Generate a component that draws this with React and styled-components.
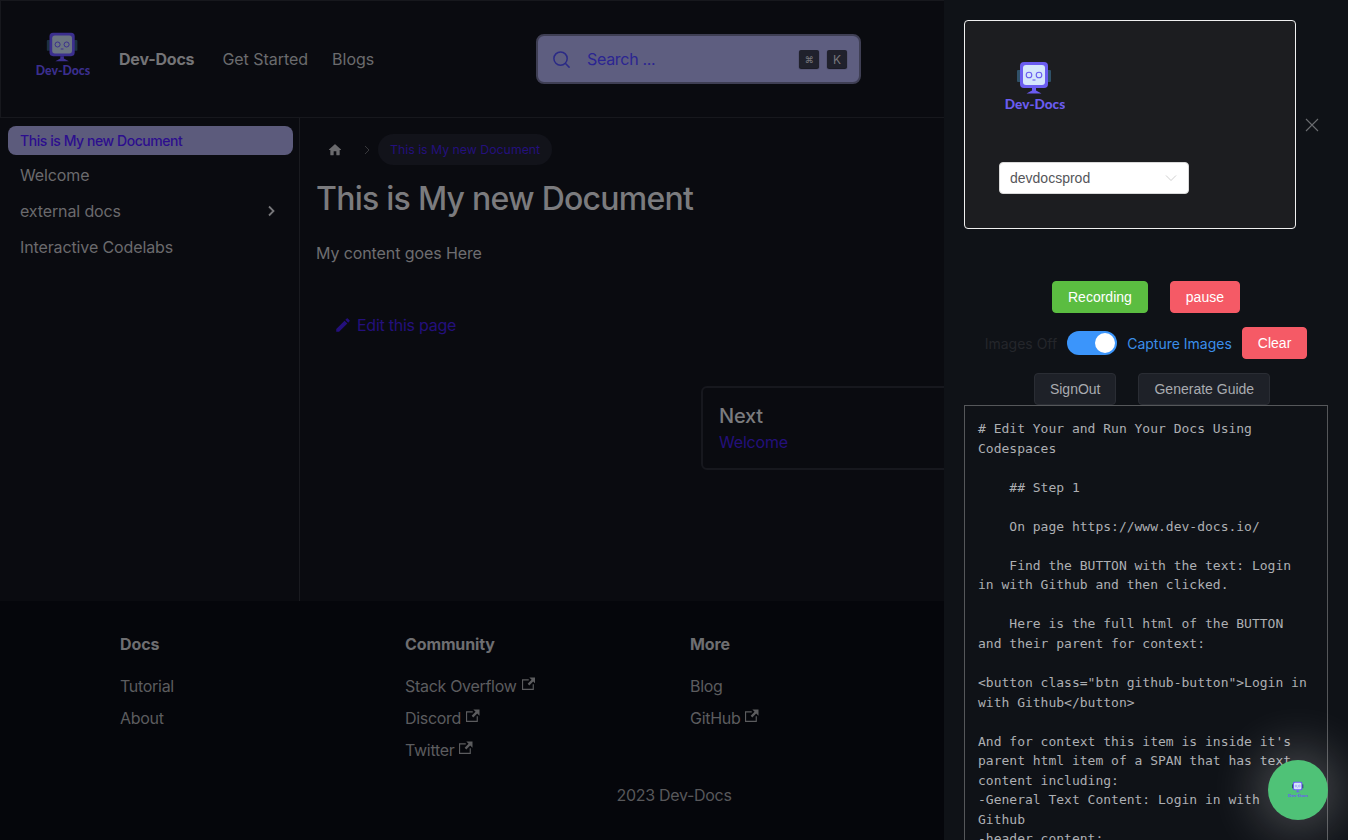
import React from 'react';
import styled, { createGlobalStyle } from 'styled-components';

const Global = createGlobalStyle`
  html, body { margin: 0; padding: 0; height: 100%; overflow: hidden; background: #0a0b10; }
  * { box-sizing: border-box; }
  body { font-family: Inter, "Liberation Sans", sans-serif; -webkit-font-smoothing: antialiased; }
`;

const Page = styled.div`
  width: 1348px; height: 840px; display: flex; flex-direction: column; overflow: hidden; position: relative;
  background: #0a0b10; color: #707073;
`;
const Nav = styled.header`
  height: 118px; flex: none; display: flex; align-items: center; padding: 0 0 0 35px;
  border: 1px solid #17181d; border-right: 0;
`;
const NavLogo = styled.div`margin-top: -9px;`;
const NavBrand = styled.a`font-weight: 700; font-size: 16px; color: #747477; margin: 0 28px 0 29px; line-height: 24px; letter-spacing: -0.2px;`;
const NavLink = styled.a`font-size: 16px; color: #6b6b6e; margin-right: 24px; line-height: 24px; letter-spacing: -0.03px;`;
const SearchBox = styled.div`
  position: absolute; left: 536px; top: 34px; width: 325px; height: 50px; display: flex; align-items: center;
  padding: 0 12px 0 14px; background: #5e5e80; border: 2px solid #3f3f54; border-radius: 8px;
  color: #2b2592; font-size: 16px; letter-spacing: -0.3px;
`;
const SearchText = styled.span`margin-left: 16px; flex: 1;`;
const Key = styled.kbd`
  width: 20px; height: 18px; margin-left: 8px; display: flex; align-items: center; justify-content: center;
  background: #20212c; border-radius: 2px; box-shadow: 0 1px 1px #14151c; color: #77777c;
  font: ${p => p.$small ? '9px' : '12px'} Inter, sans-serif;
`;
const Body = styled.div`height: 483px; flex: none; display: flex;`;
const Sidebar = styled.nav`width: 300px; flex: none; border-right: 1px solid #1a1b20; padding: 8px 6px 0 8px;`;
const SideActive = styled.a`
  display: block; height: 29px; padding: 0 12px; line-height: 30px; font-size: 14px; font-weight: 500;
  background: #5c5b7c; color: #2c0e8e; border-radius: 8px; letter-spacing: -0.44px; margin-bottom: 2px;
`;
const SideItem = styled.a`
  display: flex; align-items: center; justify-content: space-between; height: 36px; padding: 0 12px;
  font-size: 16px; color: #6a6a6d; letter-spacing: -0.12px;
`;
const Main = styled.main`flex: 1; padding: 16px 0 0 16px; min-width: 0;`;
const Crumbs = styled.div`display: flex; align-items: center; height: 31px; padding-left: 11px;`;
const CrumbSep = styled.span`width: 36px; display: flex; justify-content: flex-end; padding-right: 8px;`;
const CrumbPill = styled.span`
  height: 31px; padding: 0 12px; display: flex; align-items: center; border-radius: 16px;
  background: #12131a; color: #24107c; font-size: 12.3px; margin-left: -1px;
`;
const Title = styled.h1`margin: 15px 0 0; font-size: 32px; line-height: 37px; font-weight: 500; color: #7b7b7e; letter-spacing: -0.74px;`;
const Para = styled.p`margin: 24px 0 0; font-size: 16px; line-height: 24px; color: #6e6e71; letter-spacing: -0.1px;`;
const EditLink = styled.a`
  display: flex; align-items: center; gap: 5px; margin: 48px 0 0 18px; font-size: 16px; line-height: 24px; color: #24107c; letter-spacing: -0.25px;
`;
const Pager = styled.div`display: grid; grid-template-columns: 370px 370px; gap: 16px; width: 756px; margin-top: 49px; margin-left: -1px;`;
const PagerCard = styled.a`
  grid-column: 2; height: 84px; padding: 16px 16px 0; border: 2px solid #17181e; border-radius: 6px; display: block;
`;
const PagerTitle = styled.div`font-size: 20px; line-height: 24px; font-weight: 500; color: #7b7b7e; letter-spacing: -0.2px;`;
const PagerSub = styled.div`font-size: 16px; line-height: 20px; margin-top: 4px; color: #24107c; letter-spacing: -0.2px;`;
const Footer = styled.footer`flex: 1; background: #05060b; padding: 31px 0 0 120px; position: relative;`;
const FootCols = styled.div`display: grid; grid-template-columns: repeat(3, 285px);`;
const FootCol = styled.div`display: flex; flex-direction: column;`;
const FootTitle = styled.div`font-weight: 700; font-size: 16px; line-height: 24px; color: #6e6e71; margin-bottom: 14px; letter-spacing: -0.12px;`;
const FootLink = styled.a`
  font-size: 16px; line-height: 32px; color: #5c5c5f; display: flex; align-items: center; gap: 5px; letter-spacing: -0.3px;
`;
const Copy = styled.div`margin: 17px 0 0 -120px; text-align: center; font-size: 16px; line-height: 24px; color: #58585b; letter-spacing: -0.3px;`;

const Drawer = styled.aside`
  position: fixed; top: 0; right: 0; bottom: 0; width: 404px; background: #0f1217; padding: 20px 20px 0;
  overflow: hidden; display: flex; flex-direction: column; align-items: stretch;
`;
const DrawerHead = styled.div`display: flex; align-items: center; gap: 9px;`;
const CloseBtn = styled.button`
  width: 14px; height: 14px; padding: 0; border: 0; background: none; color: #6a6c70; display: flex;
`;
const OrgCard = styled.div`
  width: 332px; height: 209px; background: #1c1d20; border: 1px solid #f0f0f0; border-radius: 4px;
  padding: 39px 0 0 34px; display: flex; flex-direction: column; align-items: flex-start;
`;
const OrgLogo = styled.div`margin-left: 6px;`;
const Select = styled.div`
  width: 190px; height: 32px; margin-top: 50px; background: #fff; border: 1px solid #d9d9d9; border-radius: 4px;
  display: flex; align-items: center; justify-content: space-between; padding: 0 11px 0 10px;
  font: 14px "Liberation Sans", Arial, sans-serif; color: #55565a;
`;
const ActionsRow = styled.div`
  display: flex; align-items: center; justify-content: center; margin-top: ${p => p.$top}px; gap: ${p => p.$gap}px;
  transform: translateX(${p => p.$shift || 0}px);
`;
const Btn = styled.button`
  height: 32px; padding: 0 15px; border-radius: 4px; font: 14px "Liberation Sans", Arial, sans-serif; flex: none;
  color: ${p => (p.$kind === 'plain' ? '#a9abb0' : '#fff')};
  background: ${p => ({ green: '#5bbd41', red: '#f55a66', plain: '#1e2128' }[p.$kind])};
  border: 1px solid ${p => ({ green: '#5bbd41', red: '#f55a66', plain: '#2a2d34' }[p.$kind])};
`;
const OffLabel = styled.span`font-size: 14px; color: #24262b; margin-right: 10px;`;
const OnLabel = styled.span`font-size: 14px; color: #3b8eea; margin: 0 10px;`;
const Toggle = styled.span`
  width: 50px; height: 24px; border-radius: 12px; background: #3b95fb; display: flex; justify-content: flex-end; padding: 2px;
`;
const Knob = styled.span`width: 20px; height: 20px; border-radius: 50%; background: #fff;`;
const Output = styled.pre`
  margin: 0; flex: 1; width: 364px; border: 1px solid #55575a; border-bottom: 0; padding: 13px 13px 0;
  font: 13px/19.55px "DejaVu Sans Mono", monospace; color: #adafb3; white-space: pre-wrap; overflow: hidden;
`;
const Fab = styled.button`
  position: fixed; left: 1268px; top: 760px; width: 60px; height: 60px; border-radius: 50%; border: 0; padding: 0;
  background: #4fc277; display: flex; align-items: center; justify-content: center;
  box-shadow: 0 0 50px 12px rgba(255,255,255,.24);
`;

const Logo = ({ width, dim }) => {
  const p = dim ? '#3b2f8e' : '#6a5cf0';
  const s = dim ? '#6b7581' : '#d5e6fb';
  const e = dim ? '#1c3040' : '#2f5168';
  return (
    <svg width={width} viewBox="0 0 60 52" style={{ display: 'block' }}>
      <rect x="12" y="10" width="4" height="12" rx="1" fill={e} />
      <rect x="42" y="10" width="4" height="12" rx="1" fill={e} />
      <rect x="15" y="2" width="28" height="26" rx="4" fill={p} />
      <rect x="18" y="5" width="22" height="20" rx="3" fill={s} />
      <circle cx="24" cy="15" r="2.8" fill="none" stroke={p} strokeWidth="1.1" />
      <circle cx="34" cy="15" r="2.8" fill="none" stroke={p} strokeWidth="1.1" />
      <path d="M27.5 20h3" stroke={p} strokeWidth="1.1" />
      <path d="M27 28h4v2.500l5.500 3h-15l5.500-3z" fill={p} />
      <text x="30" y="49" textAnchor="middle" fontFamily="Lato, sans-serif" fontWeight="900" fontSize="13.6" fill={p}>Dev-Docs</text>
    </svg>
  );
};
const Ext = () => (
  <svg width="13.5" height="13.5" viewBox="0 0 24 24" fill="currentColor" style={{ marginTop: -4 }}>
    <path d="M21 13v10h-21v-19h12v2h-10v15h17v-8h2zm3-12h-10.988l4.035 4-6.977 7.07 2.828 2.828 6.977-7.07 4.125 4.172v-11z" />
  </svg>
);
const output = `# Edit Your and Run Your Docs Using Codespaces

    ## Step 1

    On page https://www.dev-docs.io/

    Find the BUTTON with the text: Login in with Github and then clicked.

    Here is the full html of the BUTTON and their parent for context:

<button class="btn github-button">Login in with Github</button>

And for context this item is inside it's parent html item of a SPAN that has text content including:
-General Text Content: Login in with Github
-header content:`;

export default function App() {
  return (
    <Page>
      <Global />
      <Nav>
        <NavLogo><Logo width={54} dim /></NavLogo>
        <NavBrand>Dev-Docs</NavBrand>
        <NavLink>Get Started</NavLink>
        <NavLink>Blogs</NavLink>
        <SearchBox>
          <svg width="19" height="19" viewBox="0 0 20 20" fill="none" stroke="#2b2a86" strokeWidth="1.6" strokeLinecap="round">
            <circle cx="9" cy="9" r="7" /><path d="M14.2 14.2L18 18" />
          </svg>
          <SearchText>Search ...</SearchText>
          <Key $small>⌘</Key>
          <Key>K</Key>
        </SearchBox>
      </Nav>
      <Body>
        <Sidebar>
          <SideActive>This is My new Document</SideActive>
          <SideItem>Welcome</SideItem>
          <SideItem>external docs
            <svg width="16" height="16" viewBox="0 0 16 16" fill="none" stroke="#77777a" strokeWidth="1.8" style={{ marginRight: 2 }}><path d="M6 3.5L10.5 8 6 12.5" /></svg>
          </SideItem>
          <SideItem>Interactive Codelabs</SideItem>
        </Sidebar>
        <Main>
          <Crumbs>
            <svg width="16" height="16" viewBox="0 0 24 24" fill="#6a6a6d"><path d="M10 19v-5h4v5c0 .55.45 1 1 1h3c.55 0 1-.45 1-1v-7h1.7c.46 0 .68-.57.33-.87L12.67 3.6c-.38-.34-.96-.34-1.34 0l-8.36 7.53c-.34.3-.13.87.33.87H5v7c0 .55.45 1 1 1h3c.55 0 1-.45 1-1z" /></svg>
            <CrumbSep>
              <svg width="8" height="10" viewBox="0 0 8 10" fill="none" stroke="#38383c" strokeWidth="1"><path d="M2 1l4 4-4 4" /></svg>
            </CrumbSep>
            <CrumbPill>This is My new Document</CrumbPill>
          </Crumbs>
          <Title>This is My new Document</Title>
          <Para>My content goes Here</Para>
          <EditLink>
            <svg width="18" height="18" viewBox="0 0 40 40" fill="#24107c"><path d="m34.5 11.7l-3 3.1-6.3-6.3 3.1-3q0.5-0.5 1.2-0.5t1.1 0.5l3.9 3.9q0.5 0.4 0.5 1.1t-0.5 1.2z m-29.5 17.1l18.4-18.5 6.3 6.3-18.4 18.4h-6.3v-6.2z" /></svg>
            Edit this page
          </EditLink>
          <Pager>
            <PagerCard>
              <PagerTitle>Next</PagerTitle>
              <PagerSub>Welcome</PagerSub>
            </PagerCard>
          </Pager>
        </Main>
      </Body>
      <Footer>
        <FootCols>
          <FootCol>
            <FootTitle>Docs</FootTitle>
            <FootLink>Tutorial</FootLink>
            <FootLink>About</FootLink>
          </FootCol>
          <FootCol>
            <FootTitle>Community</FootTitle>
            <FootLink>Stack Overflow <Ext /></FootLink>
            <FootLink>Discord <Ext /></FootLink>
            <FootLink>Twitter <Ext /></FootLink>
          </FootCol>
          <FootCol>
            <FootTitle>More</FootTitle>
            <FootLink>Blog</FootLink>
            <FootLink>GitHub <Ext /></FootLink>
          </FootCol>
        </FootCols>
        <Copy>2023 Dev-Docs</Copy>
      </Footer>
      <Drawer>
        <DrawerHead>
          <OrgCard>
            <OrgLogo><Logo width={60} /></OrgLogo>
            <Select>
              devdocsprod
              <svg width="12" height="12" viewBox="0 0 12 12" fill="none" stroke="#c8c8c8" strokeWidth="0.9"><path d="M1 3.500l5 5 5-5" /></svg>
            </Select>
          </OrgCard>
          <CloseBtn>
            <svg width="14" height="14" viewBox="0 0 14 14" fill="none" stroke="currentColor" strokeWidth="1.1"><path d="M1 1l12 12M13 1L1 13" /></svg>
          </CloseBtn>
        </DrawerHead>
        <ActionsRow $top={52} $gap={22}>
          <Btn $kind="green">Recording</Btn>
          <Btn $kind="red">pause</Btn>
        </ActionsRow>
        <ActionsRow $top={14} $gap={0}>
          <OffLabel>Images Off</OffLabel>
          <Toggle><Knob /></Toggle>
          <OnLabel>Capture Images</OnLabel>
          <Btn $kind="red">Clear</Btn>
        </ActionsRow>
        <ActionsRow $top={14} $gap={22} $shift={6}>
          <Btn $kind="plain">SignOut</Btn>
          <Btn $kind="plain">Generate Guide</Btn>
        </ActionsRow>
        <Output>{output}</Output>
      </Drawer>
      <Fab><Logo width={20} /></Fab>
    </Page>
  );
}
